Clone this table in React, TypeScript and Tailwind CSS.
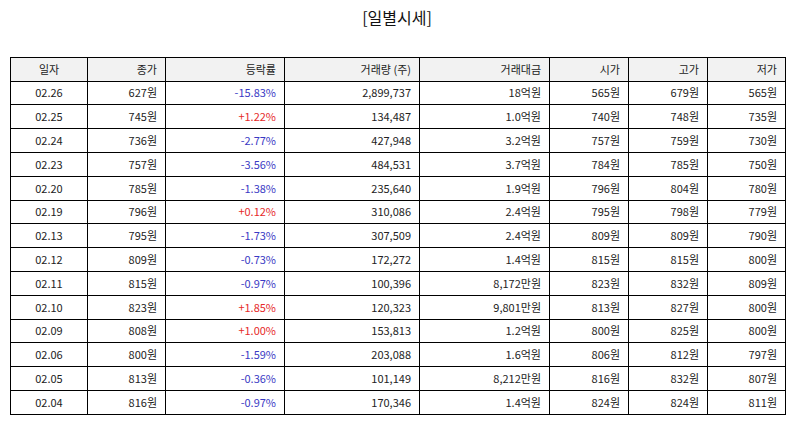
import React from 'react'

type Row = [string, string, string, string, string, string, string, string]

const rows: Row[] = [
  ['02.26', '627원', '-15.83%', '2,899,737', '18억원', '565원', '679원', '565원'],
  ['02.25', '745원', '+1.22%', '134,487', '1.0억원', '740원', '748원', '735원'],
  ['02.24', '736원', '-2.77%', '427,948', '3.2억원', '757원', '759원', '730원'],
  ['02.23', '757원', '-3.56%', '484,531', '3.7억원', '784원', '785원', '750원'],
  ['02.20', '785원', '-1.38%', '235,640', '1.9억원', '796원', '804원', '780원'],
  ['02.19', '796원', '+0.12%', '310,086', '2.4억원', '795원', '798원', '779원'],
  ['02.13', '795원', '-1.73%', '307,509', '2.4억원', '809원', '809원', '790원'],
  ['02.12', '809원', '-0.73%', '172,272', '1.4억원', '815원', '815원', '800원'],
  ['02.11', '815원', '-0.97%', '100,396', '8,172만원', '823원', '832원', '809원'],
  ['02.10', '823원', '+1.85%', '120,323', '9,801만원', '813원', '827원', '800원'],
  ['02.09', '808원', '+1.00%', '153,813', '1.2억원', '800원', '825원', '800원'],
  ['02.06', '800원', '-1.59%', '203,088', '1.6억원', '806원', '812원', '797원'],
  ['02.05', '813원', '-0.36%', '101,149', '8,212만원', '816원', '832원', '807원'],
  ['02.04', '816원', '-0.97%', '170,346', '1.4억원', '824원', '824원', '811원'],
]

const headers = ['일자', '종가', '등락률', '거래량 (주)', '거래대금', '시가', '고가', '저가']
const widths = ['w-[77px]', 'w-[78px]', 'w-[119px]', 'w-[135px]', 'w-[130px]', 'w-[79px]', 'w-[79px]', 'w-[78px]']

export default function App() {
  return (
    <div
      className="w-[794px] h-[425px] bg-white text-[#222]"
      style={{ fontFamily: '"Noto Sans CJK KR", "Noto Sans", sans-serif' }}
    >
      <h1 className="pt-[5px] h-[57px] text-center text-[16px] leading-[24px] text-[#111]">[일별시세]</h1>
      <table className="ml-[10px] w-[775px] border-collapse table-fixed text-[11px]">
        <colgroup>
          {widths.map((w, i) => (
            <col key={i} className={w} />
          ))}
        </colgroup>
        <thead>
          <tr className="h-[23.6px] bg-[#f2f2f2]">
            {headers.map((h, i) => (
              <th
                key={h}
                className={`border border-black font-normal px-[8px] py-0 leading-none ${
                  i === 0 ? 'text-center' : 'text-right'
                }`}
              >
                {h}
              </th>
            ))}
          </tr>
        </thead>
        <tbody>
          {rows.map((r) => (
            <tr key={r[0]} className="h-[23.8px]">
              {r.map((c, i) => (
                <td
                  key={i}
                  className={`border border-black px-[8px] py-0 leading-none ${
                    i === 0 ? 'text-center' : 'text-right'
                  } ${i === 2 ? (c.startsWith('+') ? 'text-[#e62a2a]' : 'text-[#3a3ac4]') : ''}`}
                >
                  {c}
                </td>
              ))}
            </tr>
          ))}
        </tbody>
      </table>
    </div>
  )
}
